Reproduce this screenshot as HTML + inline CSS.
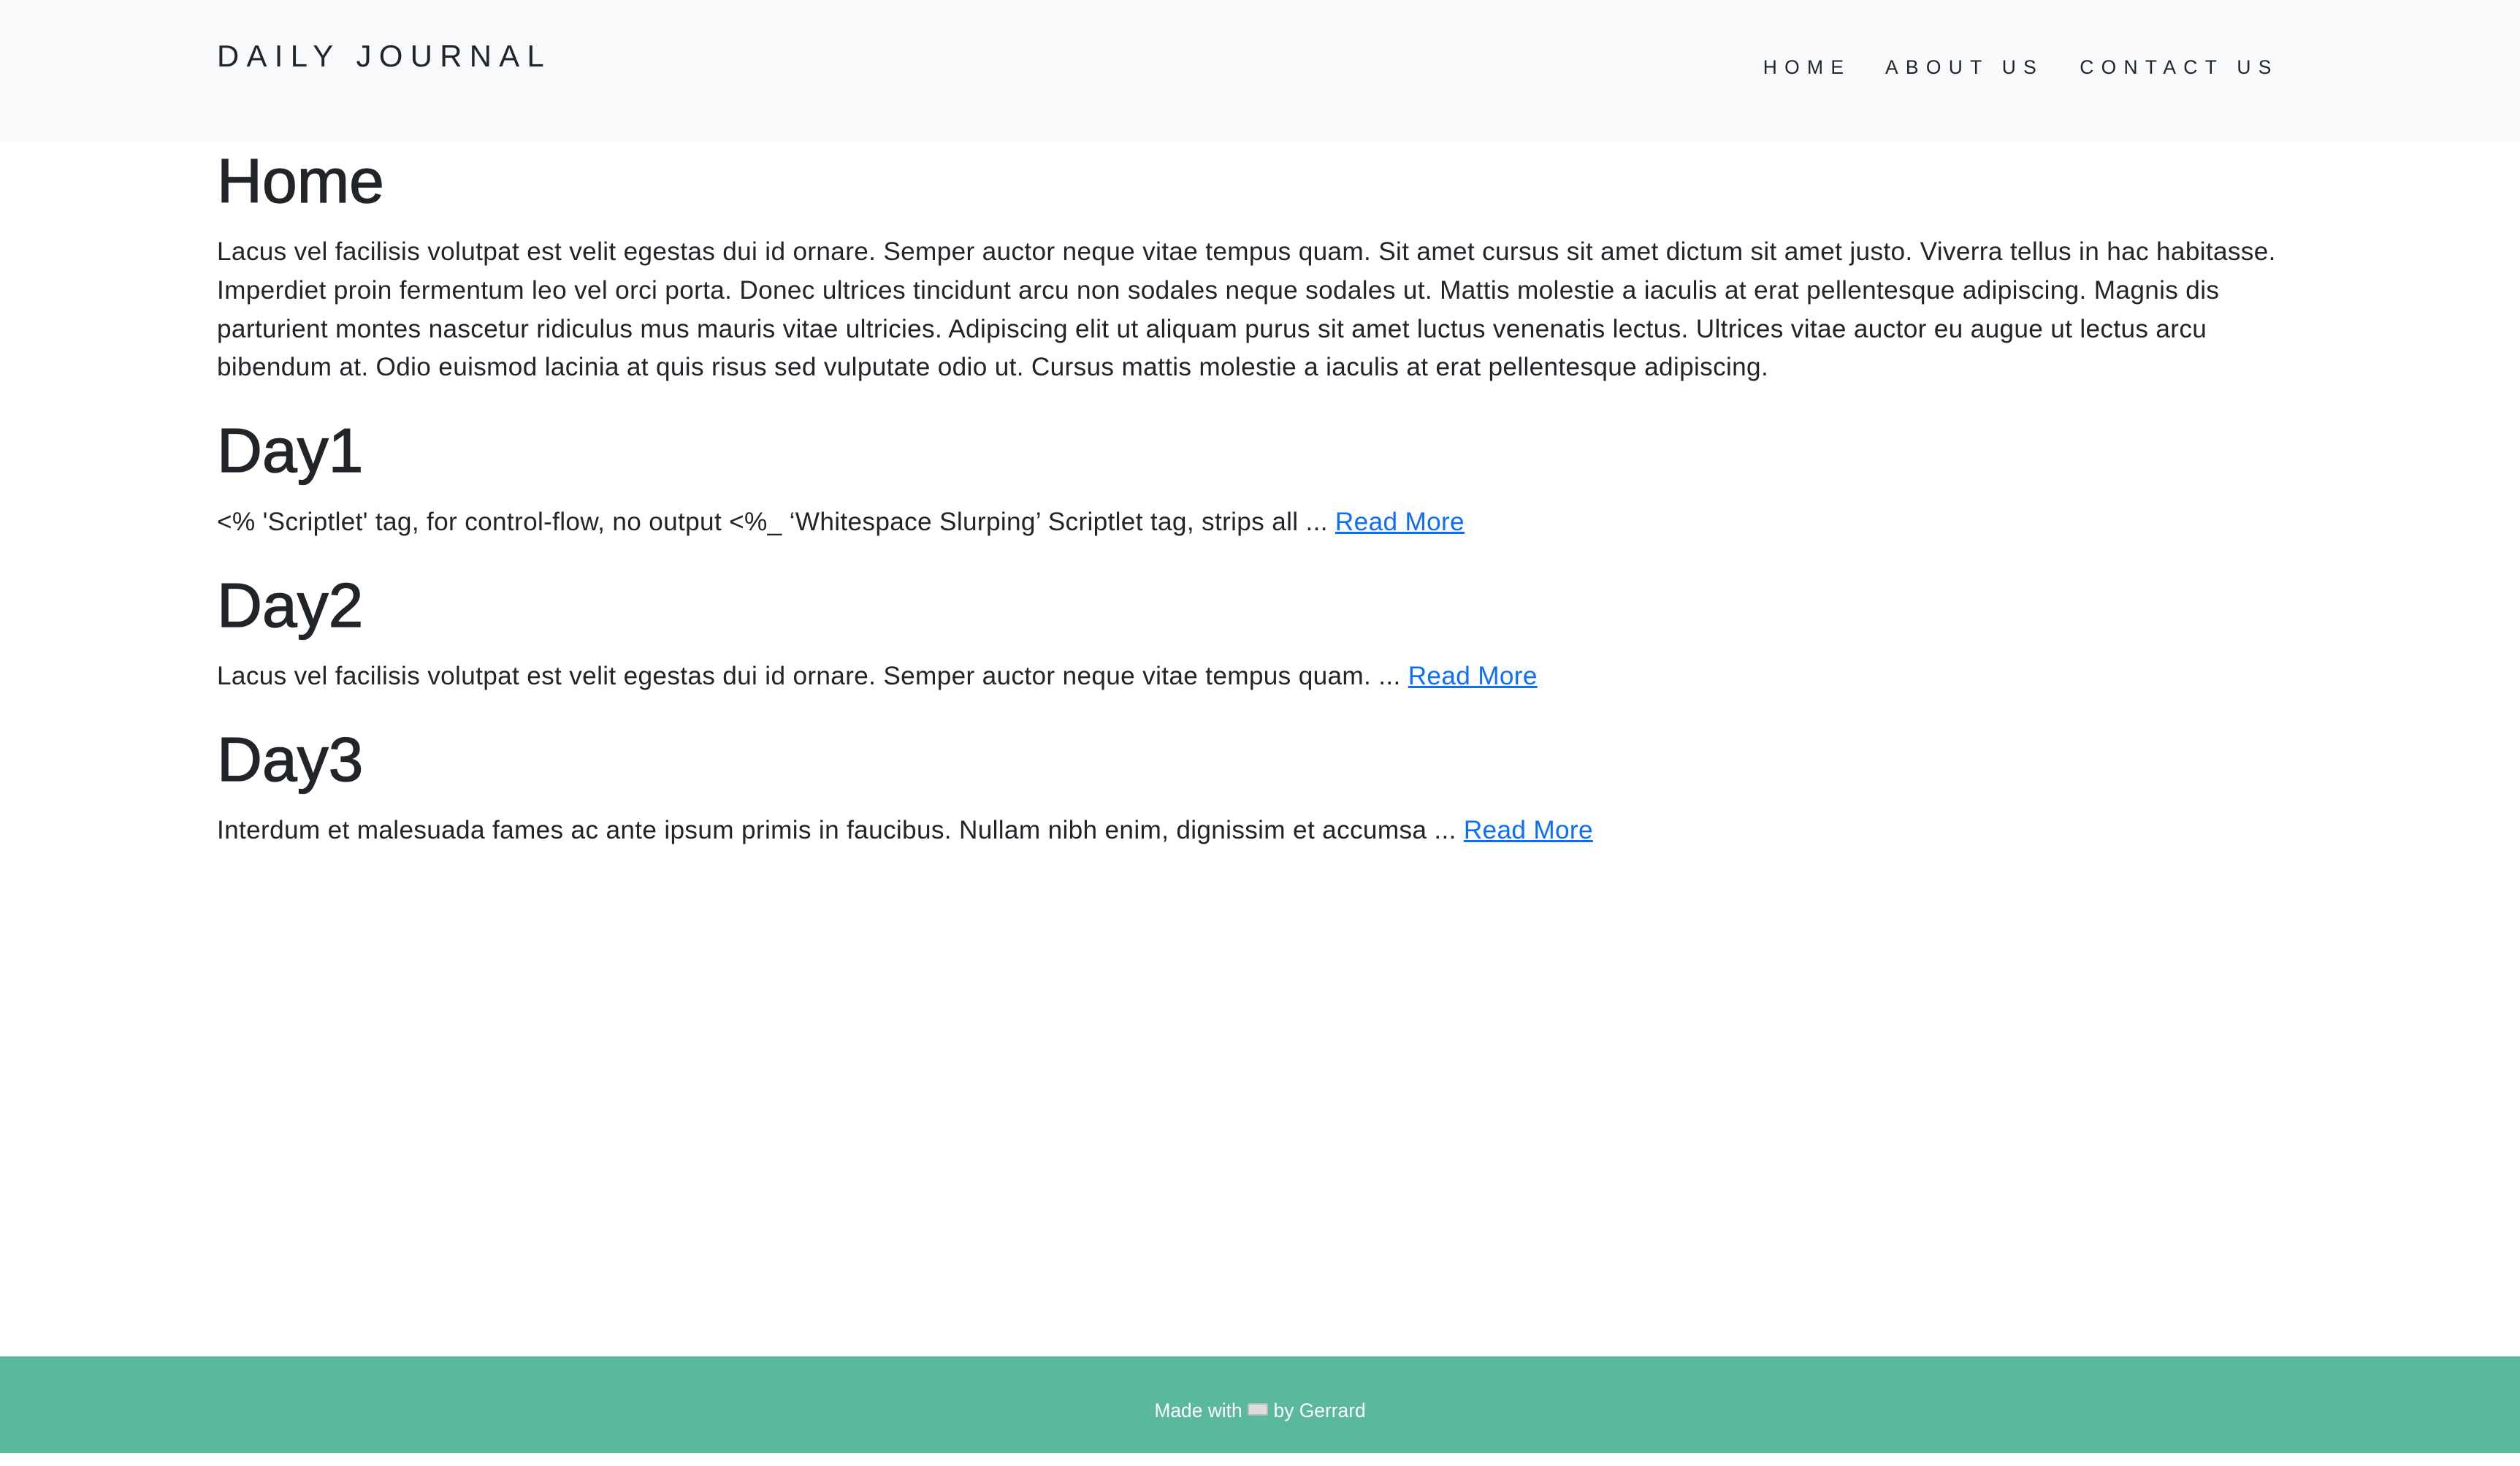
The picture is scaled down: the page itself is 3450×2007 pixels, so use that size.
<!DOCTYPE html>
<html><head><meta charset="utf-8"><style>
html{zoom:2.2003}
body{margin:0;width:1568px;height:904px;position:relative;font-family:"Liberation Sans",sans-serif;color:#212529;background:#fff;overflow:hidden}
.hdr{height:88px;background:#f8f9fa;position:relative}
.brand{position:absolute;left:135px;top:23px;font-size:19px;letter-spacing:4.7px;line-height:24px}
.nav{position:absolute;top:34px;font-size:12px;letter-spacing:4.7px;line-height:16px}
.c{position:absolute;left:135px;top:89px;width:1300px}
h1{margin:0 0 8px;font-size:39px;font-weight:500;line-height:48px;letter-spacing:0px;-webkit-text-stroke:0.6px #212529}
p{margin:0 0 16px;font-size:16px;line-height:24px;white-space:nowrap;letter-spacing:0.15px}
a{color:#0d6efd;text-decoration:underline}
.ft{position:absolute;left:0;top:844px;width:1568px;height:60px;background:#5ab99c;color:#fff;font-size:12px;text-align:center;line-height:68px}
</style></head><body>
<div class="hdr">
<div class="brand">DAILY JOURNAL</div>
<div class="nav" style="left:1097px">HOME</div>
<div class="nav" style="left:1173px">ABOUT US</div>
<div class="nav" style="left:1294px">CONTACT US</div>
</div>
<div class="c">
<h1>Home</h1>
<p>Lacus vel facilisis volutpat est velit egestas dui id ornare. Semper auctor neque vitae tempus quam. Sit amet cursus sit amet dictum sit amet justo. Viverra tellus in hac habitasse.<br>Imperdiet proin fermentum leo vel orci porta. Donec ultrices tincidunt arcu non sodales neque sodales ut. Mattis molestie a iaculis at erat pellentesque adipiscing. Magnis dis<br>parturient montes nascetur ridiculus mus mauris vitae ultricies. Adipiscing elit ut aliquam purus sit amet luctus venenatis lectus. Ultrices vitae auctor eu augue ut lectus arcu<br>bibendum at. Odio euismod lacinia at quis risus sed vulputate odio ut. Cursus mattis molestie a iaculis at erat pellentesque adipiscing.</p>
<h1>Day1</h1>
<p>&lt;% 'Scriptlet' tag, for control-flow, no output &lt;%_ ‘Whitespace Slurping’ Scriptlet tag, strips all ... <a>Read More</a></p>
<h1>Day2</h1>
<p>Lacus vel facilisis volutpat est velit egestas dui id ornare. Semper auctor neque vitae tempus quam. ... <a>Read More</a></p>
<h1>Day3</h1>
<p>Interdum et malesuada fames ac ante ipsum primis in faucibus. Nullam nibh enim, dignissim et accumsa ... <a>Read More</a></p>
</div>
<div class="ft">Made with <span style="display:inline-block;width:11px;height:6px;background:#ddd;border:1px solid #bbb;border-radius:1px;vertical-align:1px"></span> by Gerrard</div>
</body></html>
